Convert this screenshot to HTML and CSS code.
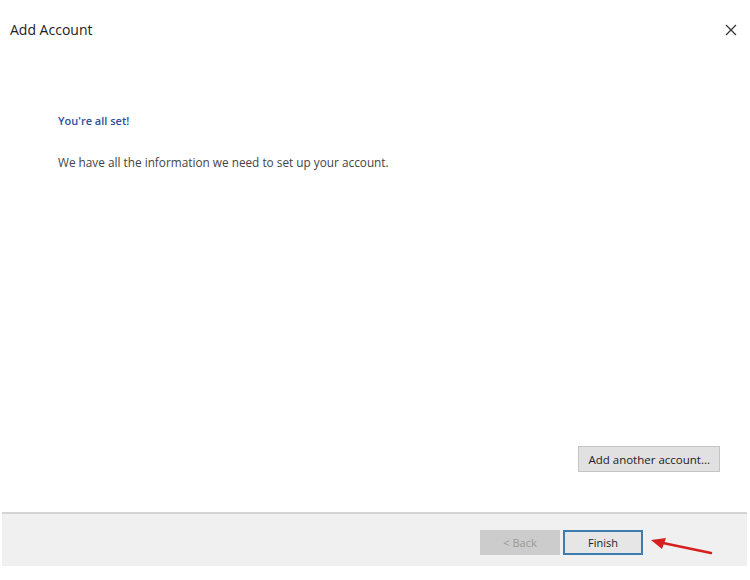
FILE: index.html
```html
<!DOCTYPE html>
<html lang="en">
<head>
    <meta charset="UTF-8">
    <title>Add Account</title>
    <link rel="stylesheet" href="styles.css">
</head>
<body>
    <div class="dialog">
        <div class="titlebar">
            <span class="title">Add Account</span>
            <svg class="close" width="12" height="12" viewBox="0 0 12 12">
                <path d="M1 1L11 11M11 1L1 11" stroke="#333" stroke-width="1.2" fill="none"/>
            </svg>
        </div>
        <div class="content">
            <h2 class="heading">You're all set!</h2>
            <p class="info">We have all the information we need to set up your account.</p>
            <div class="spacer"></div>
            <div class="extra">
                <button class="btn">Add another account...</button>
            </div>
        </div>
        <div class="footer">
            <button class="btn back" disabled>&lt; Back</button>
            <button class="btn finish">Finish</button>
            <svg class="arrow" width="64" height="22" viewBox="0 0 64 22">
                <path d="M62 16L14 6" stroke="#d42020" stroke-width="2.5" stroke-linecap="round"/>
                <path d="M2 3L17 1L13 12Z" fill="#d42020"/>
            </svg>
        </div>
    </div>
</body>
</html>
```

FILE: styles.css
```css
body {
    margin: 0;
    background-color: #ffffff;
    font-family: "Open Sans", "Noto Sans", sans-serif;
    color: #333;
}
.dialog {
    width: 750px;
    height: 580px;
    display: flex;
    flex-direction: column;
}
.titlebar {
    height: 60px;
    display: flex;
    justify-content: space-between;
    align-items: center;
    padding: 0 13px 0 10px;
}
.title {
    font-size: 14px;
    color: #222;
    margin-top: -1px;
}
.close {
    margin-top: -1px;
}
.content {
    flex: 1;
    display: flex;
    flex-direction: column;
    padding: 0 30px 0 58px;
}
.heading {
    font-size: 11px;
    font-weight: 600;
    color: #2c4f9e;
    margin: 53px 0 0;
}
.info {
    font-size: 11.8px;
    color: #444;
    margin: 26px 0 0;
}
.spacer {
    flex: 1;
}
.extra {
    display: flex;
    justify-content: flex-end;
    margin-bottom: 40px;
}
.btn {
    font-family: "Open Sans", "Noto Sans", sans-serif;
    font-size: 11.5px;
    color: #222;
    background-color: #e1e1e1;
    border: 1px solid #c4c4c4;
    height: 26px;
    padding: 0 9px;
}
.footer {
    position: relative;
    height: 48px;
    margin: 0 3px 14px 2px;
    background-color: #f0f0f0;
    border-top: 2px solid #d4d4d4;
    display: flex;
    align-items: center;
    padding: 4px 0 0 478px;
    gap: 3px;
}
.footer .btn {
    width: 80px;
    height: 25px;
    font-size: 11px;
}
.back {
    background-color: #cccccc;
    border-color: #cccccc;
    color: #999;
}
.finish {
    background-color: #e6e6e6;
    border: 2px solid #3d7cae;
}
.arrow {
    position: absolute;
    left: 647px;
    top: 23px;
}
```
